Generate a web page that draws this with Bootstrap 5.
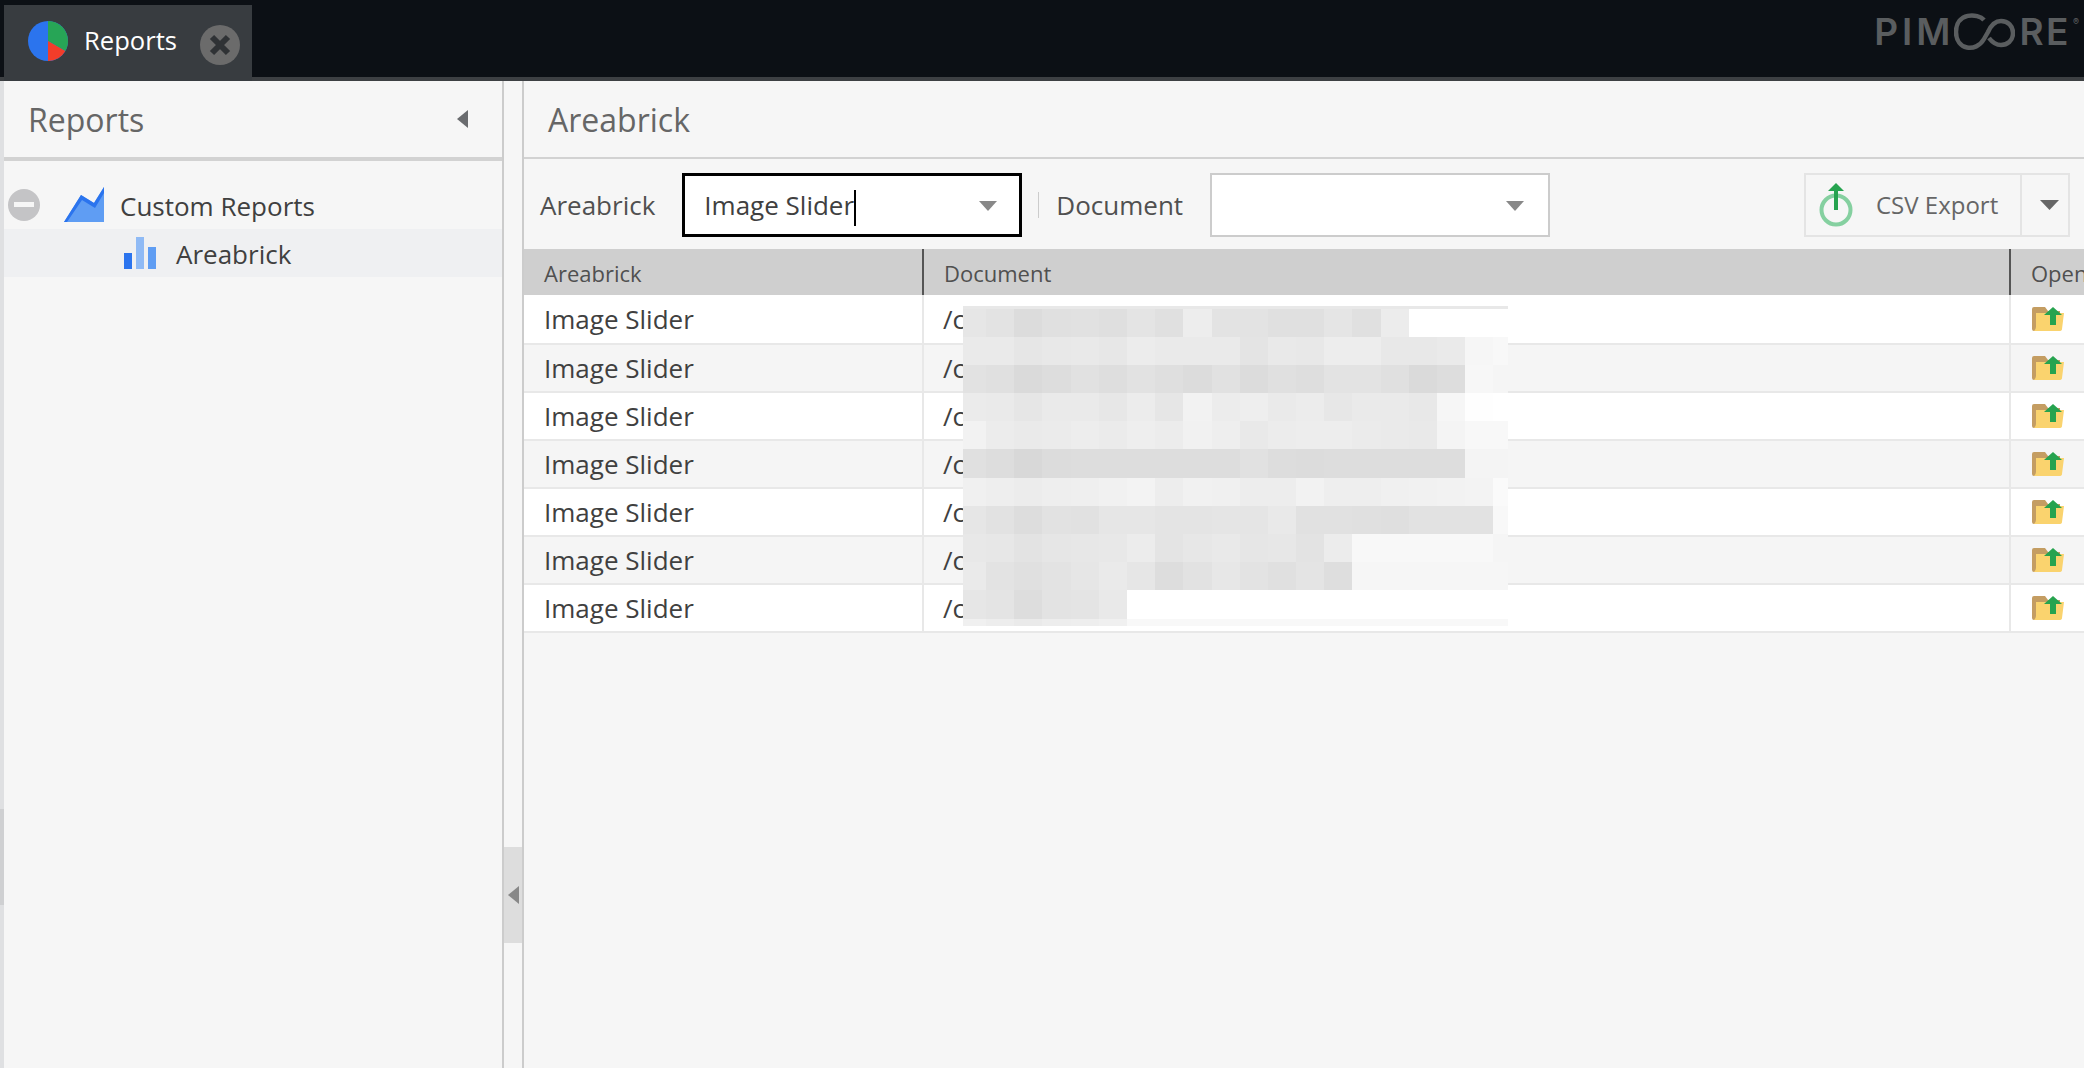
<!DOCTYPE html>
<html lang="en">
<head>
    <meta charset="UTF-8">
    <title>Reports</title>
    <meta name="viewport" content="width=device-width, initial-scale=1">
    <link href="https://cdn.jsdelivr.net/npm/bootstrap@5.3.0/dist/css/bootstrap.min.css" rel="stylesheet">
    <style>
        html, body { height: 100%; overflow: hidden; }
        body { font-family: "Open Sans", sans-serif; background: #f6f6f6; color: #404040; }
        .top-bar { height: 81px; background: #0c1015; border-bottom: 4px solid #3d4043; }
        .top-tab { width: 248px; height: 76px; margin-top: 5px; margin-left: 4px; padding-left: 24px; background: #383c40; color: #fff; font-size: 25.6px; }
        .top-tab span { margin-left: 16px; width: 116px; margin-top: -3px; }
        .top-tab svg { flex: none; margin-top: -4px; }
        .top-tab svg:last-child { margin-top: 4px; }
        .brand { margin-right: 5px; height: 63px; color: #5a5d5f; font-family: "Inter", sans-serif; font-weight: 600; font-size: 37px; line-height: 1; }
        .brand-word { letter-spacing: 2.5px; }
        .brand-first { letter-spacing: 4px; }
        .brand-mark { font-size: 9px; margin: -20px 0 0 2px; }
        .main-area { height: 987px; }
        .scroll-strip { width: 4px; background: #dfe0e2; position: relative; }
        .scroll-thumb { position: absolute; left: 0; top: 728px; width: 4px; height: 96px; background: #cfd0d2; }
        .side-panel { width: 500px; border-right: 2px solid #ccc; }
        .panel-title { height: 76px; padding-left: 24px; padding-top: 2px; font-size: 32px; color: #666; }
        .side-head { border-bottom: 4px solid #d2d2d2; height: 80px; padding-right: 34px; }
        .side-head svg { margin-top: -2px; }
        .tree-list { padding-top: 20px; font-size: 26px; }
        .tree-row { height: 48px; padding-left: 4px; }
        .tree-row svg { flex: none; }
        .tree-row span { padding-top: 2px; }
        .tree-icon { margin-left: 24px; margin-right: 16px; }
        .tree-row-active { height: 48px; background: #eff0f2; padding-left: 120px; }
        .tree-row-active span { margin-left: 20px; padding-top: 2px; }
        .gutter { width: 18px; }
        .gutter-handle { margin-top: 766px; height: 96px; background: #ddd; padding-left: 4px; }
        .report-panel { border-left: 2px solid #ccc; min-width: 0; flex: 1; position: relative; }
        .report-head { height: 78px; border-bottom: 2px solid #d2d2d2; padding-left: 24px; }
        .tool-row { height: 90px; padding: 2px 0 0 16px; font-size: 26px; color: #505050; }
        .combo { width: 340px; height: 64px; background: #fff; border: 2px solid #ccc; padding: 0 24px 0 20px; font-size: 26px; color: #404040; }
        .combo svg { margin-top: 2px; }
        .combo-focus { border: 3px solid #000; margin-left: 27px; padding-left: 19px; padding-right: 22px; }
        .combo-focus span { padding-top: 2px; }
        .text-cursor { display: inline-block; width: 2px; height: 36px; background: #000; vertical-align: middle; }
        .tool-sep { width: 1px; height: 26px; background: #ccc; margin: 0 17px 0 16px; }
        .doc-combo { margin-left: 27px; }
        .export-btn { width: 266px; height: 64px; margin-left: auto; margin-right: 14px; border: 2px solid #e4e4e4; font-size: 24px; color: #666; }
        .export-main { width: 216px; padding-left: 13px; border-right: 2px solid #e4e4e4; height: 100%; }
        .export-main span { margin-left: 23px; }
        .export-caret { margin-left: auto; margin-right: 9px; }
        .report-grid { table-layout: fixed; width: 1660px; margin: 0; border-collapse: separate; border-spacing: 0; --bs-table-bg: transparent; }
        .report-grid th { height: 46px; background: #cfcfcf; padding: 2px 0 0 20px; font-weight: 400; font-size: 22px; color: #505050; border: 0; border-left: 2px solid #555; vertical-align: middle; }
        .report-grid th:first-child { border-left: 0; padding-left: 20px; }
        .report-grid td { height: 48px; padding: 0 0 0 19px; font-size: 26px; color: #404040; border: 0; border-left: 2px solid #e8e8e8; border-bottom: 2px solid #e8e8e8; vertical-align: middle; background: #fff; }
        .report-grid td:first-child { border-left: 0; padding-left: 20px; }
        .report-grid tr:first-child td { height: 50px; }
        .report-grid tr:nth-child(even) td { background: #f5f5f5; }
        .report-grid td:last-child { padding-left: 21px; }
        .report-grid td svg { display: block; }
        .blur-box { position: absolute; left: 439px; top: 225px; width: 545px; display: grid; grid-template-columns: 23px repeat(18, 28.2px) 14.4px; }
    </style>
</head>
<body>
    <!-- top bar -->
    <div class="top-bar d-flex justify-content-between">
        <div class="top-tab d-flex align-items-center">
            <svg width="40" height="40" viewBox="0 0 40 40">
                <circle cx="20" cy="20" r="20" fill="#2b74ee"/>
                <path d="M20 20V0A20 20 0 0 1 37.3 30Z" fill="#27a556"/>
                <path d="M20 20L37.3 30A20 20 0 0 1 20 40Z" fill="#f23d2a"/>
            </svg>
            <span>Reports</span>
            <svg width="40" height="40" viewBox="0 0 40 40">
                <circle cx="20" cy="20" r="20" fill="#6b6b6b"/>
                <path d="M12 12L28 28M28 12L12 28" stroke="#2f3235" stroke-width="6"/>
            </svg>
        </div>
        <div class="brand d-flex align-items-center">
            <span class="brand-first">PIM</span>
            <svg width="61" height="38" viewBox="0 0 61 38">
                <path d="M30 7C24 0 2 -1 2 19C2 37 22 40 30 26L34 19C38 10 43 8 47 8C54 8 59 13 59 20C59 28 53 32 47 32C42 32 38 29 35 25" fill="none" stroke="#5a5d5f" stroke-width="4.5"/>
            </svg>
            <span class="brand-word ms-1">RE</span>
            <span class="brand-mark">®</span>
        </div>
    </div>

    <div class="main-area d-flex">
        <div class="scroll-strip"><div class="scroll-thumb"></div></div>

        <!-- left panel -->
        <div class="side-panel">
            <div class="side-head panel-title d-flex align-items-center justify-content-between">
                <span>Reports</span>
                <svg width="11" height="18" viewBox="0 0 11 18"><path d="M11 0V18L0 9Z" fill="#6a6c6f"/></svg>
            </div>
            <div class="tree-list">
                <div class="tree-row d-flex align-items-center">
                    <svg width="32" height="32" viewBox="0 0 32 32"><circle cx="16" cy="16" r="16" fill="#c4c4c6"/><rect x="6" y="13" width="20" height="5" fill="#f6f6f6"/></svg>
                    <svg class="tree-icon" width="40" height="36" viewBox="0 0 40 36"><path d="M0 35L17 8L30 16L40 0V35Z" fill="#5f9df3"/><path d="M0 35L17 8L30 16L40 0V6L31 21L18 13L3 35Z" fill="#2b74ee"/></svg>
                    <span>Custom Reports</span>
                </div>
                <div class="tree-row-active d-flex align-items-center">
                    <svg width="32" height="32" viewBox="0 0 32 32"><rect x="0" y="16" width="8" height="16" fill="#2b74ee"/><rect x="12" y="0" width="8" height="32" fill="#8fbaf5"/><rect x="24" y="10" width="8" height="22" fill="#5f9df3"/></svg>
                    <span>Areabrick</span>
                </div>
            </div>
        </div>

        <!-- collapse gutter -->
        <div class="gutter">
            <div class="gutter-handle d-flex align-items-center">
                <svg width="11" height="18" viewBox="0 0 11 18"><path d="M11 0V18L0 9Z" fill="#888"/></svg>
            </div>
        </div>

        <!-- report panel -->
        <div class="report-panel">
            <div class="report-head panel-title d-flex align-items-center"><span>Areabrick</span></div>
            <div class="tool-row d-flex align-items-center">
                <span>Areabrick</span>
                <div class="combo combo-focus d-flex align-items-center justify-content-between">
                    <span>Image Slider<i class="text-cursor"></i></span>
                    <svg width="18" height="10" viewBox="0 0 18 10"><path d="M0 0H18L9 10Z" fill="#888"/></svg>
                </div>
                <div class="tool-sep ms-3"></div>
                <span>Document</span>
                <div class="combo doc-combo d-flex align-items-center justify-content-end">
                    <svg width="18" height="10" viewBox="0 0 18 10"><path d="M0 0H18L9 10Z" fill="#888"/></svg>
                </div>
                <div class="export-btn d-flex align-items-center">
                    <div class="export-main d-flex align-items-center">
                        <svg width="34" height="44" viewBox="0 0 34 44">
                            <circle cx="17" cy="27" r="14.5" fill="none" stroke="#85d0a0" stroke-width="4"/>
                            <path d="M9 8L17 0L25 8H19V27H15V8Z" fill="#26a34f"/>
                        </svg>
                        <span>CSV Export</span>
                    </div>
                    <svg class="export-caret" width="19" height="10" viewBox="0 0 19 10"><path d="M0 0H19L9.5 10Z" fill="#666"/></svg>
                </div>
            </div>

            <table class="table report-grid">
                <colgroup><col style="width:398px"><col style="width:1087px"><col style="width:175px"></colgroup>
                <thead><tr><th>Areabrick</th><th>Document</th><th>Open</th></tr></thead>
                <tbody id="report-rows"></tbody>
            </table>

            <div class="blur-box" id="blur-box"></div>
        </div>
    </div>

    <script>
        // grid rows, all the same
        const folderIcon = `<svg width="33" height="24" viewBox="0 0 33 24">
            <path d="M2 0H13L16 4H28V24H2Q0 24 0 22V2Q0 0 2 0Z" fill="#c49d62"/>
            <path d="M4 6H32L30 22Q30 24 27 24H2Q4 22 4 20Z" fill="#fad36e"/>
            <path d="M12 8L21 0L30 8H24V18H18V8Z" fill="#26a34f"/>
        </svg>`;
        let rows = "";
        for (let i = 0; i < 7; i++) {
            rows += `<tr><td>Image Slider</td><td>/c</td><td>${folderIcon}</td></tr>`;
        }
        document.getElementById("report-rows").innerHTML = rows;

        // pixelated blur over the document paths: [height, grey values]
        const bands = [
            [3, "e8 e8 e8 e8 e8 e8 e8 e8 e8 e8 e8 e8 e8 e8 e8 e8 e8 e8 e8 e8"],
            [28, "e6 e3 dc e0 e1 df e4 e0 ed e3 e3 e0 e0 e5 e0 ec ff ff ff ff"],
            [28, "ea ea e6 e8 e9 e7 ec ea ea ea e4 e9 e8 ed ed e8 e8 ea f6 f8"],
            [28, "e2 e0 da dd e1 de e2 df dc e1 dc e0 de e3 e3 e0 da dd f7 f5"],
            [28, "eb ea e6 ea ea e7 ec e6 f2 ec ee ea ec e7 ea ea e8 f6 fe ff"],
            [28, "f2 ec ea eb ed eb ee ec f1 ee e9 ec ed ed eb ea e9 f4 f8 f8"],
            [29, "e0 dd d8 dc dd dd dd dd dd dd e1 dd dc dd dd dd dd dd f4 f4"],
            [28, "f0 ee ec ee ef f1 f3 ed f1 f0 ed ed f2 ee ee f0 f1 f2 f3 fa"],
            [28, "e6 e2 dd e2 e1 e6 e6 e4 e4 e5 e5 e9 e1 e1 e0 df e2 e2 e2 f8"],
            [28, "e8 e7 e3 e6 e7 e8 ec e4 e7 e9 e6 e7 e3 ec f8 f8 f8 f8 f8 f5"],
            [28, "ea e3 e0 e3 e6 ea e6 dd e2 e7 e3 e0 e4 de f6 f6 f6 f6 f6 f6"],
            [29, "e6 e4 dd e3 e4 e9 ff ff ff ff ff ff ff ff ff ff ff ff ff ff"],
            [7, "f0 ed ea ed ee f0 f8 f8 f8 f8 f8 f8 f8 f8 f8 f8 f8 f8 f8 f8"]
        ];
        let cells = "";
        for (const [h, greys] of bands) {
            for (const g of greys.split(" ")) {
                cells += `<div style="height:${h}px;background:#${g}${g}${g}"></div>`;
            }
        }
        document.getElementById("blur-box").innerHTML = cells;
    </script>
    <script src="https://cdn.jsdelivr.net/npm/bootstrap@5.3.0/dist/js/bootstrap.bundle.min.js"></script>
</body>
</html>
